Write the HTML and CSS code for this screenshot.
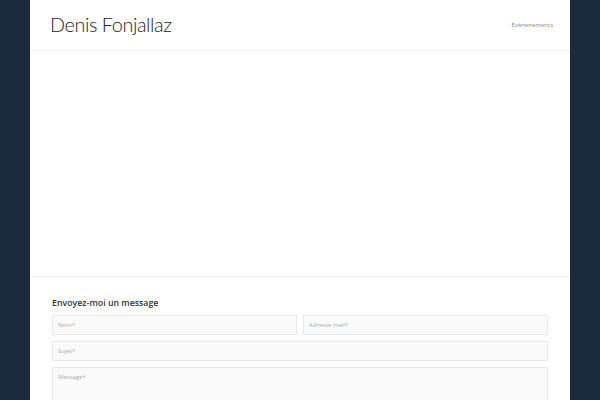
FILE: index.html
```html
<!DOCTYPE html>
<html lang="fr">
<head>
<meta charset="utf-8">
<title>Denis Fonjallaz</title>
<link rel="stylesheet" href="styles.css">
</head>
<body>
<div class="page">
  <header class="header">
    <div class="logo">Denis Fonjallaz</div>
    <nav class="nav"><a href="#">Évènenements</a></nav>
  </header>
  <section class="hero"></section>
  <section class="contact">
    <h2 class="contact-title">Envoyez-moi un message</h2>
    <form class="form">
      <div class="row two">
        <input class="field" type="text" placeholder="Nom*">
        <input class="field" type="email" placeholder="Adresse mail*">
      </div>
      <div class="row">
        <input class="field" type="text" placeholder="Sujet*">
      </div>
      <div class="row">
        <textarea class="field area" placeholder="Message*"></textarea>
      </div>
    </form>
  </section>
</div>
</body>
</html>
```
FILE: styles.css
```css
html, body {
  margin: 0;
  padding: 0;
  background: #1b2a3c;
  height: 100%;
  overflow: hidden;
}
.page {
  width: 540px;
  margin: 0 auto;
  background: #ffffff;
  min-height: 100%;
  font-family: "Open Sans", "Liberation Sans", sans-serif;
}
.header {
  height: 50px;
  border-bottom: 1px solid #efefef;
  display: flex;
  align-items: center;
  justify-content: space-between;
  padding: 0 17px 0 20px;
}
.logo {
  font-family: "Lato", "Liberation Sans", sans-serif;
  font-weight: 300;
  font-size: 19.8px;
  color: #222;
  letter-spacing: -0.4px;
  margin-top: -2px;
}
.nav {
  font-size: 6px;
  line-height: 1;
}
.nav a {
  color: #888;
  text-decoration: none;
}
.hero {
  height: 225px;
  border-bottom: 1px solid #efefef;
}
.contact {
  padding: 17px 22px 0 22px;
}
.contact-title {
  margin: 0 0 3px 0;
  font-size: 8.8px;
  line-height: 18px;
  font-weight: 600;
  color: #333;
}
.form {
  display: flex;
  flex-direction: column;
  gap: 6px;
}
.row {
  display: flex;
  gap: 6px;
}
.row.two .field {
  flex: 1;
}
.field {
  box-sizing: border-box;
  width: 100%;
  height: 20px;
  margin: 0;
  padding: 0 5px;
  border: 1px solid #e8e8e8;
  background: #fafafa;
  font-family: "Open Sans", "Liberation Sans", sans-serif;
  font-size: 6px;
  color: #555;
  outline: none;
}
.field::placeholder {
  color: #aaa;
}
.area {
  height: 60px;
  padding-top: 5px;
  resize: none;
}
```
